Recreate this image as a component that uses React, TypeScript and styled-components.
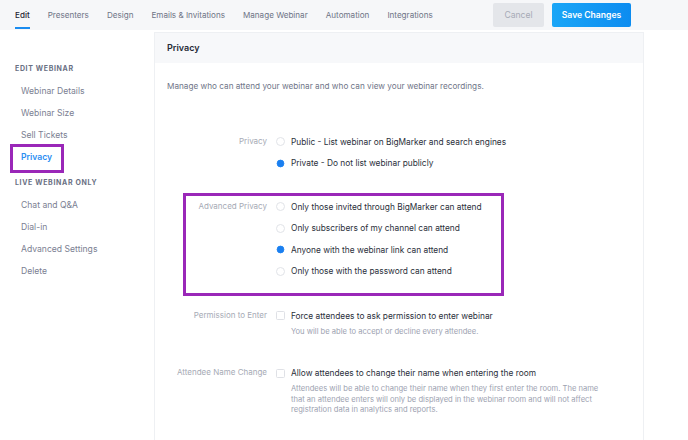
import styled, { createGlobalStyle } from "styled-components";

const GlobalStyle = createGlobalStyle`
  body {
    margin: 0;
    background: #fff;
    font-family: Inter, "Noto Sans", sans-serif;
    -webkit-font-smoothing: antialiased;
  }
`;

const TopBar = styled.div`
  display: flex;
  align-items: center;
  height: 30px;
  padding: 0 57px 0 15px;
  background: #f6f7f9;
`;
const Tabs = styled.div`
  display: flex;
  gap: 18px;
  height: 100%;
`;
const Tab = styled.div<{ $active?: boolean }>`
  position: relative;
  display: flex;
  align-items: center;
  font-size: 8.1px;
  font-weight: ${(p) => (p.$active ? 500 : 400)};
  color: ${(p) => (p.$active ? "#1f2433" : "#6e7486")};
  ${(p) =>
    p.$active &&
    `&::after {
      content: "";
      position: absolute;
      left: 0;
      right: 0;
      bottom: 1px;
      height: 2px;
      background: #1a8cf0;
    }`}
`;
const Actions = styled.div`
  display: flex;
  gap: 8px;
  margin-left: auto;
`;
const Button = styled.button<{ $primary?: boolean }>`
  all: unset;
  box-sizing: border-box;
  width: ${(p) => (p.$primary ? 79 : 51)}px;
  height: 24px;
  border-radius: 2px;
  text-align: center;
  font-size: 8.6px;
  font-weight: ${(p) => (p.$primary ? 600 : 400)};
  line-height: 24px;
  color: ${(p) => (p.$primary ? "#fff" : "#a6aab6")};
  background: ${(p) =>
    p.$primary ? "linear-gradient(90deg, #1aa6f7, #0c8cf0)" : "#e4e6ea"};
`;

const Main = styled.div`
  display: flex;
`;
const Sidebar = styled.nav`
  width: 154px;
  padding-top: 32px;
`;
const SideHeading = styled.div<{ $gap?: number }>`
  margin: ${(p) => p.$gap ?? 0}px 0 4px 15px;
  font-size: 7px;
  font-weight: 700;
  line-height: 14px;
  letter-spacing: 0.65px;
  text-transform: uppercase;
  color: #6a7083;
`;
const SideItem = styled.div<{ $active?: boolean }>`
  position: relative;
  height: 22px;
  padding-left: 21px;
  font-size: 8.6px;
  line-height: 22px;
  font-weight: ${(p) => (p.$active ? 600 : 400)};
  color: ${(p) => (p.$active ? "#2b8ef2" : "#7b8092")};
  ${(p) =>
    p.$active &&
    `&::after {
      content: "";
      position: absolute;
      left: 10px;
      top: -2px;
      width: 48px;
      height: 23px;
      border: 3px solid #9a27b8;
    }`}
`;

const Panel = styled.section`
  box-sizing: border-box;
  width: 490px;
  margin-top: 2px;
  border: 1px solid #eef0f3;
  border-bottom: none;
  min-height: 420px;
`;
const PanelHeader = styled.div`
  height: 30px;
  padding-left: 12px;
  background: #f7f8fa;
  font-size: 9px;
  font-weight: 600;
  line-height: 30px;
  color: #262b36;
`;
const Intro = styled.p`
  margin: 16px 0 38px 12px;
  font-size: 8.2px;
  line-height: 14px;
  color: #6f7588;
`;
const Field = styled.div<{ $gap?: number }>`
  position: relative;
  display: grid;
  grid-template-columns: 112px 1fr;
  column-gap: 9px;
  margin-top: ${(p) => p.$gap ?? 0}px;
`;
const Highlight = styled.div`
  position: absolute;
  left: 28px;
  top: -3px;
  width: 315px;
  height: 97px;
  border: 3px solid #9a27b8;
  pointer-events: none;
`;
const Label = styled.div`
  text-align: right;
  font-size: 8px;
  line-height: 21.5px;
  color: #a6aab5;
`;
const Options = styled.div`
  display: flex;
  flex-direction: column;
`;
const Option = styled.label`
  display: flex;
  align-items: center;
  gap: 6px;
  height: 21.5px;
  font-size: 8.35px;
  color: #2b303b;
`;
const Radio = styled.span<{ $checked?: boolean }>`
  box-sizing: border-box;
  width: 9px;
  height: 9px;
  border-radius: 50%;
  border: ${(p) => (p.$checked ? "1px solid #1a7ff0" : "1px solid #e1e3e8")};
  background: ${(p) => (p.$checked ? "#1a7ff0" : "#fff")};
  ${(p) => p.$checked && "transform: scale(0.85);"}
`;
const Box = styled.span`
  box-sizing: border-box;
  width: 9px;
  height: 9px;
  border-radius: 1.5px;
  border: 1px solid #dfe1e6;
  background: #fff;
`;
const Help = styled.div`
  padding: 0 34px 0 15px;
  font-size: 7.6px;
  line-height: 10.8px;
  color: #9da2b1;
`;

const tabs = [
  "Edit",
  "Presenters",
  "Design",
  "Emails & Invitations",
  "Manage Webinar",
  "Automation",
  "Integrations",
];

const advanced = [
  { text: "Only those invited through BigMarker can attend" },
  { text: "Only subscribers of my channel can attend" },
  { text: "Anyone with the webinar link can attend", checked: true },
  { text: "Only those with the password can attend" },
];

export default function App() {
  return (
    <>
      <GlobalStyle />
      <TopBar>
        <Tabs>
          {tabs.map((t, i) => (
            <Tab key={t} $active={i === 0}>
              {t}
            </Tab>
          ))}
        </Tabs>
        <Actions>
          <Button>Cancel</Button>
          <Button $primary>Save Changes</Button>
        </Actions>
      </TopBar>
      <Main>
        <Sidebar>
          <SideHeading>Edit Webinar</SideHeading>
          <SideItem>Webinar Details</SideItem>
          <SideItem>Webinar Size</SideItem>
          <SideItem>Sell Tickets</SideItem>
          <SideItem $active>Privacy</SideItem>
          <SideHeading $gap={8}>Live Webinar Only</SideHeading>
          <SideItem>Chat and Q&amp;A</SideItem>
          <SideItem>Dial-in</SideItem>
          <SideItem>Advanced Settings</SideItem>
          <SideItem>Delete</SideItem>
        </Sidebar>
        <Panel>
          <PanelHeader>Privacy</PanelHeader>
          <Intro>
            Manage who can attend your webinar and who can view your webinar
            recordings.
          </Intro>
          <Field>
            <Label>Privacy</Label>
            <Options>
              <Option>
                <Radio />
                Public - List webinar on BigMarker and search engines
              </Option>
              <Option>
                <Radio $checked />
                Private - Do not list webinar publicly
              </Option>
            </Options>
          </Field>
          <Field $gap={22}>
            <Highlight />
            <Label>Advanced Privacy</Label>
            <Options>
              {advanced.map((o) => (
                <Option key={o.text}>
                  <Radio $checked={o.checked} />
                  {o.text}
                </Option>
              ))}
            </Options>
          </Field>
          <Field $gap={23}>
            <Label>Permission to Enter</Label>
            <Options>
              <Option>
                <Box />
                Force attendees to ask permission to enter webinar
              </Option>
              <Help>You will be able to accept or decline every attendee.</Help>
            </Options>
          </Field>
          <Field $gap={25}>
            <Label>Attendee Name Change</Label>
            <Options>
              <Option>
                <Box />
                Allow attendees to change their name when entering the room
              </Option>
              <Help>
                Attendees will be able to change their name when they first
                enter the room. The name that an attendee enters will only be
                displayed in the webinar room and will not affect registration
                data in analytics and reports.
              </Help>
            </Options>
          </Field>
        </Panel>
      </Main>
    </>
  );
}
